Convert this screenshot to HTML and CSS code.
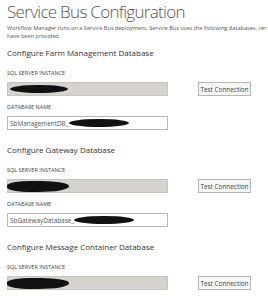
FILE: index.html
```html
<!DOCTYPE html>
<html>
<head>
    <title>Service Bus Configuration</title>
    <link rel="stylesheet" href="styles.css">
</head>
<body>
    <div class="page">
        <h1>Service Bus Configuration</h1>
        <p class="intro">
            <span class="intro-line">Workflow Manager runs on a Service Bus deployment. Service Bus uses the following databases, cer</span>
            <span class="intro-line">have been provided.</span>
        </p>

        <div class="db">
            <h2>Configure Farm Management Database</h2>
            <div class="label">SQL SERVER INSTANCE</div>
            <div class="row">
                <div class="field field-disabled"><span class="redact redact-server"></span></div>
                <button class="btn">Test Connection</button>
            </div>
            <div class="label label-second">DATABASE NAME</div>
            <div class="field">SbManagementDB_<span class="redact redact-name"></span></div>
        </div>

        <div class="db">
            <h2>Configure Gateway Database</h2>
            <div class="label">SQL SERVER INSTANCE</div>
            <div class="row">
                <div class="field field-disabled"><span class="redact redact-server redact-thick"></span></div>
                <button class="btn">Test Connection</button>
            </div>
            <div class="label label-second">DATABASE NAME</div>
            <div class="field">SbGatewayDatabase_<span class="redact redact-name"></span></div>
        </div>

        <div class="db">
            <h2>Configure Message Container Database</h2>
            <div class="label">SQL SERVER INSTANCE</div>
            <div class="row">
                <div class="field field-disabled"><span class="redact redact-server redact-thick"></span></div>
                <button class="btn">Test Connection</button>
            </div>
        </div>
    </div>
</body>
</html>
```

FILE: styles.css
```css
body {
    margin: 0;
    padding: 0;
    background: #fff;
    font-family: "Open Sans", "Noto Sans", sans-serif;
    color: #444;
    overflow: hidden;
}
.page {
    padding-left: 7px;
    width: 261px;
    overflow: hidden;
}
h1 {
    margin: 0;
    font-size: 17px;
    line-height: 24px;
    letter-spacing: -0.7px;
    font-weight: 300;
    color: #555;
    white-space: nowrap;
}
.intro {
    margin: 0;
    font-size: 5.6px;
    line-height: 8px;
    color: #555;
}
.intro-line {
    display: block;
    white-space: nowrap;
}
.db {
    margin-top: 7px;
}
.db + .db {
    margin-top: 14px;
}
h2 {
    margin: 0;
    font-size: 8px;
    line-height: 12px;
    font-weight: 400;
    color: #333;
    white-space: nowrap;
}
.label {
    margin-top: 10px;
    margin-bottom: 5px;
    font-size: 5.5px;
    line-height: 8px;
    color: #444;
    text-transform: uppercase;
}
.label-second {
    margin-top: 7px;
}
.row {
    display: flex;
    align-items: center;
    gap: 30px;
}
.field {
    box-sizing: border-box;
    width: 161px;
    height: 14px;
    border: 1px solid #b8b8b8;
    background: #fff;
    display: flex;
    align-items: center;
    padding-left: 2px;
    font-size: 6.4px;
    color: #555;
    white-space: nowrap;
}
.field-disabled {
    background: #d6d3ce;
    border-color: #c9c6c0;
}
.btn {
    box-sizing: border-box;
    width: 53px;
    height: 14px;
    padding: 0;
    border: 1px solid #b5b5b5;
    background: #f6f6f6;
    font-family: inherit;
    font-size: 6.4px;
    color: #444;
    white-space: nowrap;
}
.redact {
    display: inline-block;
    background: #111;
    border-radius: 50%;
}
.redact-server {
    width: 58px;
    height: 8px;
}
.redact-thick {
    height: 11px;
    width: 62px;
    margin-left: -3px;
    border-radius: 40% 45% 50% 40%;
}
.redact-name {
    width: 60px;
    height: 8px;
}
```
